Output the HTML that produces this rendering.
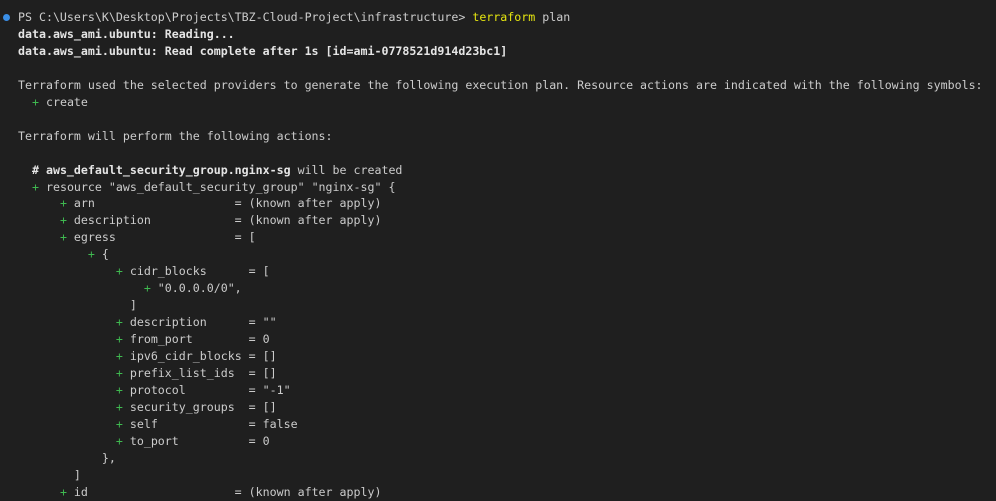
<!DOCTYPE html>
<html><head><meta charset="utf-8"><style>
html,body{margin:0;padding:0;background:#1f1f1f;width:996px;height:489px;overflow:hidden}
pre{position:absolute;left:18px;top:9px;margin:0;font-family:"DejaVu Sans Mono","Liberation Mono",monospace;font-size:11.62px;line-height:16.95px;color:#cccccc}
.g{color:#3fb950}.y{color:#e5e510}.b{font-weight:bold;color:#e5e5e5}
.dot{position:absolute;left:3px;top:14px;width:7px;height:7px;border-radius:50%;background:#3a8ee6}
</style></head><body>
<div class="dot"></div>
<pre>PS C:\Users\K\Desktop\Projects\TBZ-Cloud-Project\infrastructure> <span class="y">terraform</span> plan
<span class="b">data.aws_ami.ubuntu: Reading...</span>
<span class="b">data.aws_ami.ubuntu: Read complete after 1s [id=ami-0778521d914d23bc1]</span>

Terraform used the selected providers to generate the following execution plan. Resource actions are indicated with the following symbols:
  <span class="g">+</span> create

Terraform will perform the following actions:

  <span class="b"># aws_default_security_group.nginx-sg</span> will be created
  <span class="g">+</span> resource "aws_default_security_group" "nginx-sg" {
      <span class="g">+</span> arn                    = (known after apply)
      <span class="g">+</span> description            = (known after apply)
      <span class="g">+</span> egress                 = [
          <span class="g">+</span> {
              <span class="g">+</span> cidr_blocks      = [
                  <span class="g">+</span> "0.0.0.0/0",
                ]
              <span class="g">+</span> description      = ""
              <span class="g">+</span> from_port        = 0
              <span class="g">+</span> ipv6_cidr_blocks = []
              <span class="g">+</span> prefix_list_ids  = []
              <span class="g">+</span> protocol         = "-1"
              <span class="g">+</span> security_groups  = []
              <span class="g">+</span> self             = false
              <span class="g">+</span> to_port          = 0
            },
        ]
      <span class="g">+</span> id                     = (known after apply)
</pre>
</body></html>
